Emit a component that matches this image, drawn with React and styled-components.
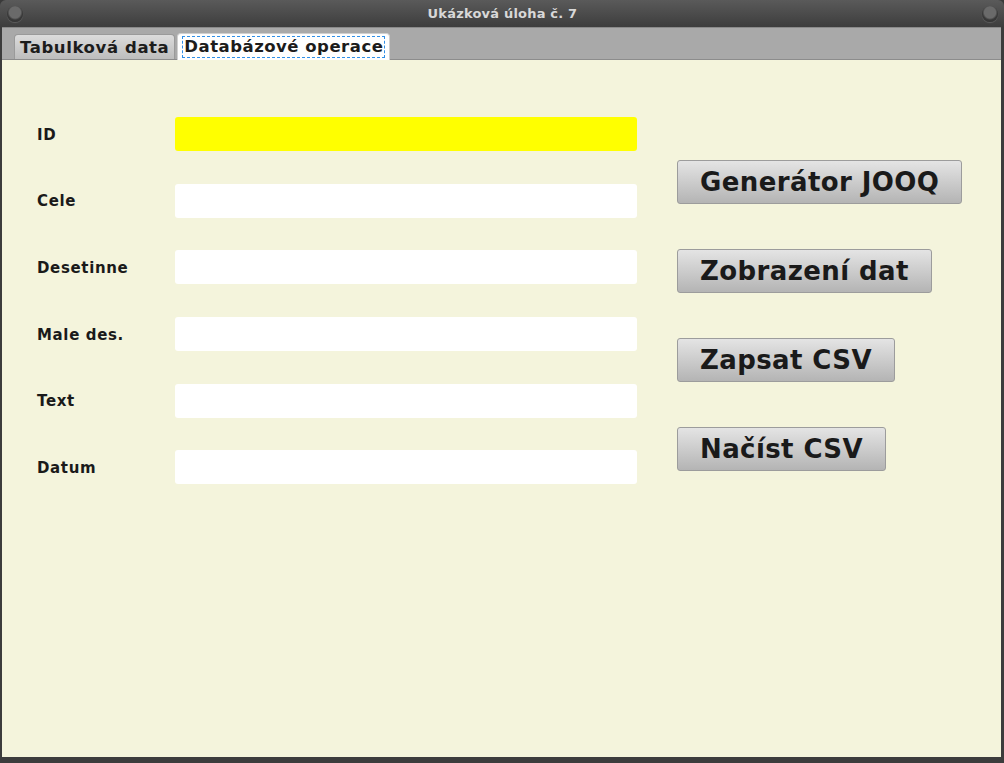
import React from "react";
import styled, { createGlobalStyle } from "styled-components";

const Global = createGlobalStyle`
  html, body { margin: 0; padding: 0; background: #3a3a3a; }
  body { font-family: "DejaVu Sans", "Liberation Sans", sans-serif; }
  * { box-sizing: border-box; }
`;

const Window = styled.div`
  width: 1004px;
  height: 763px;
  display: flex;
  flex-direction: column;
  background: #3c3c3c;
  border-radius: 6px 6px 0 0;
  overflow: hidden;
`;

const TitleBar = styled.div`
  height: 27px;
  flex: none;
  display: flex;
  align-items: center;
  justify-content: space-between;
  padding: 0 6px 0 7px;
  background: linear-gradient(#5a5a5a, #3d3d3d);
  color: #d8d8d8;
  font-weight: bold;
  font-size: 13px;
`;

const Knob = styled.div`
  width: 16px;
  height: 16px;
  border-radius: 50%;
  background: radial-gradient(circle at 50% 40%, #6a6a6a 0 45%, #3a3a3a 60%, #2c2c2c 100%);
  box-shadow: 0 1px 1px rgba(255,255,255,0.15);
`;

const Title = styled.div`
  letter-spacing: 0.2px;
`;

const Frame = styled.div`
  flex: 1;
  display: flex;
  flex-direction: column;
  margin: 0 3px 6px 2px;
  background: #f4f4dc;
`;

const TabBar = styled.div`
  height: 33px;
  flex: none;
  display: flex;
  align-items: flex-end;
  gap: 2px;
  padding-left: 12px;
  background: #a9a9a9;
  border-top: 1px solid #8a8a8a;
  border-bottom: 1px solid #8c8c8c;
`;

const Tab = styled.div`
  height: ${p => (p.$active ? "27px" : "25px")};
  display: flex;
  align-items: center;
  padding: 0 ${p => (p.$active ? "4px" : "5px")};
  margin-bottom: ${p => (p.$active ? "-1px" : "0")};
  border-radius: 4px 4px 0 0;
  font-weight: bold;
  font-size: 16.5px;
  letter-spacing: ${p => (p.$active ? "0.5px" : "0.6px")};
  color: #1c1c1c;
  background: ${p => (p.$active ? "#ffffff" : "linear-gradient(#dcdcdc, #bdbdbd)")};
  border: 1px solid ${p => (p.$active ? "#d0d0d0" : "#9a9a9a")};
  border-bottom: none;
`;

const Focus = styled.span`
  border: 1px dashed #2f8fe8;
  padding: 1px 1px 2px;
  line-height: 17px;
`;

const Content = styled.div`
  flex: 1;
  display: flex;
  align-items: flex-start;
  gap: 40px;
  padding: 57px 0 0 35px;
`;

const Form = styled.div`
  display: grid;
  grid-template-columns: 138px 462px;
  row-gap: 32.7px;
  align-items: center;
`;

const Label = styled.div`
  font-weight: bold;
  font-size: 15px;
  letter-spacing: 0.65px;
  color: #1a1a1a;
  padding-top: 1px;
`;

const Field = styled.div`
  height: 34px;
  border-radius: 3px;
  background: ${p => p.$bg || "#ffffff"};
`;

const Buttons = styled.div`
  display: flex;
  flex-direction: column;
  align-items: flex-start;
  gap: 45px;
  padding-top: 43px;
`;

const Button = styled.button`
  height: 44px;
  padding: 0 22px;
  border: 1px solid #9c9c9c;
  border-radius: 3px;
  background: linear-gradient(#e4e4e4, #b4b4b4);
  font-family: "DejaVu Sans", "Liberation Sans", sans-serif;
  font-weight: bold;
  font-size: 26px;
  letter-spacing: 0.4px;
  color: #1a1a1a;
  line-height: 1;
`;

const fields = [
  ["ID", "#ffff00"],
  ["Cele"],
  ["Desetinne"],
  ["Male des."],
  ["Text"],
  ["Datum"],
];

const buttons = ["Generátor JOOQ", "Zobrazení dat", "Zapsat CSV", "Načíst CSV"];

export default function App() {
  return (
    <>
      <Global />
      <Window>
        <TitleBar>
          <Knob />
          <Title>Ukázková úloha č. 7</Title>
          <Knob />
        </TitleBar>
        <Frame>
          <TabBar>
            <Tab>Tabulková data</Tab>
            <Tab $active>
              <Focus>Databázové operace</Focus>
            </Tab>
          </TabBar>
          <Content>
            <Form>
              {fields.map(([label, bg]) => (
                <React.Fragment key={label}>
                  <Label>{label}</Label>
                  <Field $bg={bg} />
                </React.Fragment>
              ))}
            </Form>
            <Buttons>
              {buttons.map(b => (
                <Button key={b}>{b}</Button>
              ))}
            </Buttons>
          </Content>
        </Frame>
      </Window>
    </>
  );
}
